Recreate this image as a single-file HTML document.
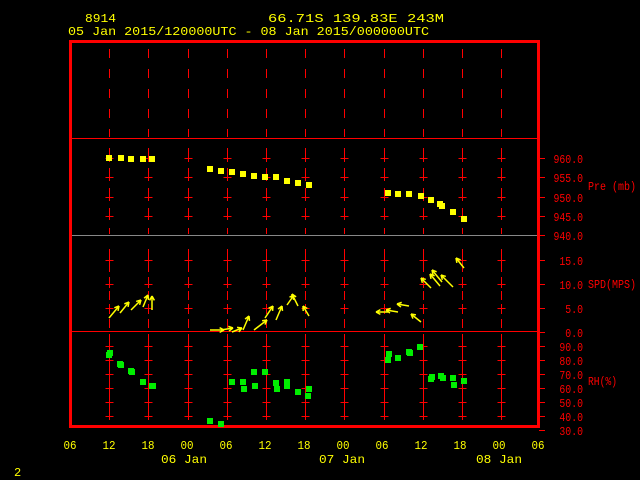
<!DOCTYPE html>
<html><head><meta charset="utf-8"><style>
html,body{margin:0;padding:0;background:#000;width:640px;height:480px;overflow:hidden}
svg{display:block}
text{font-family:"Liberation Mono",monospace;font-size:12px}
</style></head><body>
<svg id="s" width="640" height="480" viewBox="0 0 640 480" xmlns="http://www.w3.org/2000/svg">
<rect width="640" height="480" fill="#000"/>
<g fill="#ffff00">
<text x="85" y="22" textLength="31" lengthAdjust="spacingAndGlyphs">8914</text>
<text x="268" y="22" textLength="176" lengthAdjust="spacingAndGlyphs">66.71S  139.83E   243M</text>
<text x="68" y="35" textLength="361" lengthAdjust="spacingAndGlyphs">05 Jan 2015/120000UTC - 08 Jan 2015/000000UTC</text>
<text x="161" y="463" textLength="46" lengthAdjust="spacingAndGlyphs">06 Jan</text>
<text x="319" y="463" textLength="46" lengthAdjust="spacingAndGlyphs">07 Jan</text>
<text x="476" y="463" textLength="46" lengthAdjust="spacingAndGlyphs">08 Jan</text>
<text x="14" y="476">2</text>
</g>
<g id="g"></g>
<g fill="#ff0000">
<text x="588" y="190" textLength="48" lengthAdjust="spacingAndGlyphs">Pre (mb)</text>
<text x="588" y="288" textLength="48" lengthAdjust="spacingAndGlyphs">SPD(MPS)</text>
<text x="588" y="385" textLength="29" lengthAdjust="spacingAndGlyphs">RH(%)</text>
</g>
</svg>
<script>
var g=document.getElementById('g'),h='';
var R='#ff0000';
function L(x1,y1,x2,y2,c,w){h+='<line x1="'+x1+'" y1="'+y1+'" x2="'+x2+'" y2="'+y2+'" stroke="'+(c||R)+'" stroke-width="'+(w||1)+'"/>';}
var xs=[];for(var i=1;i<12;i++)xs.push(70+39.2*i);
L(70,138.5,539,138.5);L(70,235.5,539,235.5,'#888',1);L(70,331.5,539,331.5);
var yP=[158,177,197,216],yS=[260,284,308],yR=[346,360,374,388,402,416];
xs.forEach(function(x){x=Math.round(x)+0.5;
 h+='<line x1="'+x+'" y1="49" x2="'+x+'" y2="137" stroke="'+R+'" stroke-dasharray="9 11"/>';
 h+='<line x1="'+x+'" y1="148" x2="'+x+'" y2="234" stroke="'+R+'" stroke-dasharray="9 11"/>';
 h+='<line x1="'+x+'" y1="249" x2="'+x+'" y2="330" stroke="'+R+'" stroke-dasharray="9 5"/>';
 h+='<line x1="'+x+'" y1="334" x2="'+x+'" y2="420" stroke="'+R+'" stroke-dasharray="9 5"/>';
 yP.concat(yS,yR).forEach(function(y){L(x-4,y+.5,x+4,y+.5);L(x,y-4,x,y+4);});
});
h+='<rect x="70.5" y="41.5" width="468" height="385" fill="none" stroke="'+R+'" stroke-width="3"/>';
var lab=[[158,'960.0'],[177,'955.0'],[197,'950.0'],[216,'945.0'],[235,'940.0'],[260,'15.0'],[284,'10.0'],[308,'5.0'],[332,'0.0'],[346,'90.0'],[360,'80.0'],[374,'70.0'],[388,'60.0'],[402,'50.0'],[416,'40.0'],[430,'30.0']];
lab.forEach(function(a){L(539,a[0]+.5,545,a[0]+.5);var n=a[1].length*5.9;h+='<text x="'+(583-n)+'" y="'+(a[0]+5)+'" fill="'+R+'" textLength="'+n+'" lengthAdjust="spacingAndGlyphs">'+a[1]+'</text>';});
var bl=['06','12','18','00','06','12','18','00','06','12','18','00','06'];
bl.forEach(function(t,i){h+='<text x="'+(70+39*i-6.5)+'" y="449" fill="#ffff00" textLength="13" lengthAdjust="spacingAndGlyphs">'+t+'</text>';});
[[109,158],[121,158],[131,159],[143,159],[152,159],[210,169],[221,171],[232,172],[243,174],[254,176],[265,177],[276,177],[287,181],[298,183],[309,185],[388,193],[398,194],[409,194],[421,196],[431,200],[440,204],[442,206],[453,212],[464,219]].forEach(function(p){h+='<rect x="'+(p[0]-3)+'" y="'+(p[1]-3)+'" width="6" height="6" fill="#ffff00"/>';});
[[109,355],[110,353],[120,364],[121,365],[131,371],[132,372],[143,382],[152,386],[153,386],[210,421],[221,424],[232,382],[243,382],[244,389],[254,372],[255,386],[265,372],[276,383],[277,389],[287,386],[287,382],[298,392],[309,389],[308,396],[389,354],[388,360],[398,358],[409,352],[410,353],[420,347],[431,379],[432,377],[441,376],[443,378],[453,378],[454,385],[464,381]].forEach(function(p){h+='<rect x="'+(p[0]-3)+'" y="'+(p[1]-3)+'" width="6" height="6" fill="#00ee00"/>';});
var Y='#ffff00';
[[109,318,10,-12],[120,313,9,-11],[131,310,10,-10],[143,307,5,-12],[152,310,0,-14],
 [210,330,14,0],[221,330,12,-2],[232,332,10,-4],[243,330,6,-14],[254,330,13,-10],[265,318,8,-12],[276,320,6,-14],[287,305,7,-10],[298,306,-6,-12],[309,316,-6,-10],
 [388,312,-12,0],[398,312,-12,-2],[409,306,-12,-2],[421,322,-10,-8],[431,288,-10,-10],[440,286,-10,-12],[442,282,-10,-12],[453,287,-12,-12],[464,268,-8,-10]].forEach(function(a){
 var x=a[0],y=a[1],ex=x+a[2],ey=y+a[3];
 L(x,y,ex,ey,Y,1.5);
 var ang=Math.atan2(a[3],a[2]);
 L(ex,ey,ex-5*Math.cos(ang-0.5),ey-5*Math.sin(ang-0.5),Y,1.5);
 L(ex,ey,ex-5*Math.cos(ang+0.5),ey-5*Math.sin(ang+0.5),Y,1.5);
});
g.innerHTML=h;
</script>
</body></html>
